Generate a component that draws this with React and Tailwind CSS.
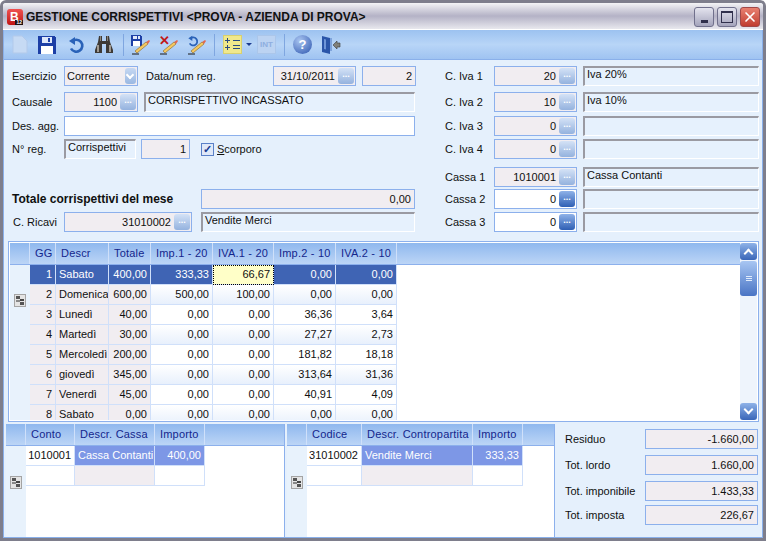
import { X } from "lucide-react";

const font = { fontFamily: '"Liberation Sans", sans-serif' };

function Label({ children, className = "" }) {
  return <span className={"text-[11px] text-[#101010] whitespace-nowrap " + className}>{children}</span>;
}

function LookupBtn({ on }) {
  return (
    <span
      className={
        "w-[16px] h-[16px] mr-[1px] shrink-0 rounded-[3px] flex items-center justify-center text-white text-[9px] leading-none font-bold " +
        (on ? "bg-linear-to-b from-[#8fb2e8] to-[#2f5fb4]" : "bg-linear-to-b from-[#d4e2f6] to-[#94b2de]")
      }
    >
      <span className="mb-[3px]">...</span>
    </span>
  );
}

function Field({ value, width, white, btn, on, select }) {
  return (
    <div
      className={
        "h-[20px] shrink-0 border border-[#8cb0ec] flex items-center justify-end text-[11px] text-[#101010] " +
        (white ? "bg-white " : "bg-[#f1edf1] ") +
        width
      }
    >
      <span className="pr-[3px] pl-[2px]">{value}</span>
      {btn && <LookupBtn on={on} />}
      {select}
    </div>
  );
}

function ReadOnly({ value, width }) {
  return (
    <div
      className={
        "h-[20px] shrink-0 border-t-2 border-l-2 border-t-[#9a9aa2] border-l-[#9a9aa2] border-r border-b border-r-white border-b-white bg-[#e6f1fd] pl-[2px] text-[11px] leading-[13px] text-[#101010] whitespace-nowrap overflow-hidden " +
        width
      }
    >
      {value}
    </div>
  );
}

function RightRow({ label, value, text, on, white, className = "" }) {
  return (
    <div className={"flex items-center " + className}>
      <Label className="w-[49px]">{label}</Label>
      <Field value={value} width="w-[83px]" white={white} btn on={on} />
      <div className="w-[6px]" />
      <ReadOnly value={text} width="w-[176px]" />
    </div>
  );
}

function RowHeadIcon() {
  return (
    <svg width="12" height="13" viewBox="0 0 12 13" shapeRendering="crispEdges">
      <rect x="0.5" y="0.5" width="11" height="12" fill="#e4e4e4" stroke="#a4a4a4" />
      <rect x="2" y="2" width="4" height="3" fill="#555" />
      <rect x="2" y="6" width="4" height="2" fill="#888" />
      <rect x="6" y="5" width="4" height="2" fill="#444" />
      <rect x="6" y="8" width="4" height="3" fill="#555" />
    </svg>
  );
}

function Head({ children }) {
  return (
    <div className="border-r border-[#cfe0fa] flex items-center justify-start pl-[5px] text-[11px] tracking-[0.2px] text-[#14268c] whitespace-nowrap">
      {children}
    </div>
  );
}

function Cell({ children, kind, left, even }) {
  const bg = {
    grey: "bg-[#f1edf1] text-[#101010]",
    plain: even ? "bg-linear-to-b from-white to-[#e8f0fc] text-[#101010]" : "bg-white text-[#101010]",
    sel: "bg-[#3f64b4] text-white",
    mark: "bg-[#7d97e6] text-white",
    focus: "bg-[#ffffc8] text-[#101010] outline-1 -outline-offset-1 outline-dotted outline-black",
  }[kind];
  return (
    <div
      className={
        "h-[20px] border-r border-b border-[#d0e0fa] flex items-center px-[3px] text-[11px] whitespace-nowrap overflow-hidden " +
        (left ? "justify-start " : "justify-end ") +
        bg
      }
    >
      {children}
    </div>
  );
}

const days = [
  ["1", "Sabato", "400,00", "333,33", "66,67", "0,00", "0,00"],
  ["2", "Domenica", "600,00", "500,00", "100,00", "0,00", "0,00"],
  ["3", "Lunedì", "40,00", "0,00", "0,00", "36,36", "3,64"],
  ["4", "Martedì", "30,00", "0,00", "0,00", "27,27", "2,73"],
  ["5", "Mercoledì", "200,00", "0,00", "0,00", "181,82", "18,18"],
  ["6", "giovedì", "345,00", "0,00", "0,00", "313,64", "31,36"],
  ["7", "Venerdì", "45,00", "0,00", "0,00", "40,91", "4,09"],
  ["8", "Sabato", "0,00", "0,00", "0,00", "0,00", "0,00"],
];

function dayKind(r, c) {
  if (r === 0) return c === 4 ? "focus" : "sel";
  return c < 3 ? "grey" : "plain";
}

function Total({ label, value, className = "" }) {
  return (
    <div className={"flex items-center " + className}>
      <Label className="w-[80px]">{label}</Label>
      <Field value={value} width="w-[113px]" />
    </div>
  );
}

function DocIcon() {
  return (
    <svg width="16" height="19" viewBox="0 0 16 19">
      <path d="M1 1h9l5 5v12H1z" fill="#c6daf4" stroke="#b2c9ea" />
    </svg>
  );
}

function FloppyIcon({ size = 18 }) {
  return (
    <svg width={size} height={size} viewBox="0 0 18 18" shapeRendering="crispEdges">
      <path d="M0 0h16l2 2v16H0z" fill="#1d3fa6" />
      <rect x="4" y="1" width="10" height="6" fill="#dfe8fa" />
      <rect x="10" y="2" width="2" height="4" fill="#1d3fa6" />
      <rect x="3" y="10" width="12" height="8" fill="#fff" />
    </svg>
  );
}

function UndoIcon({ size = 18 }) {
  return (
    <svg width={size} height={size} viewBox="0 0 18 18" fill="none">
      <path d="M5 5.5a6 6 0 1 1-1 7" stroke="#2a62b8" strokeWidth="2.6" />
      <path d="M8 1v8L2 5z" fill="#2a62b8" />
    </svg>
  );
}

function BinocularsIcon() {
  return (
    <svg width="20" height="19" viewBox="0 0 20 19">
      <path d="M5 1h3v5h4V1h3l1 6 3 8v3h-7V9H8v9H1v-3l3-8z" fill="#3e3a36" />
      <path d="M3 10h2v7H3zM15 10h2v7h-2z" fill="#a09a92" />
      <rect x="6" y="1" width="1" height="5" fill="#8a847c" />
      <rect x="13" y="1" width="1" height="5" fill="#8a847c" />
    </svg>
  );
}

function Pencil() {
  return (
    <svg width="20" height="20" viewBox="0 0 20 20" className="-ml-[20px]">
      <path d="M4 16 15 7l2 2L6 18z" fill="#f4c860" stroke="#8a6420" strokeWidth="0.6" />
      <path d="M15 7l2 2 2-3-1-1z" fill="#e06a50" />
      <path d="M1 19h7" stroke="#1a1a1a" />
    </svg>
  );
}

function PencilCombo({ children }) {
  return (
    <div className="flex w-[20px] h-[20px]">
      <div className="w-[20px] shrink-0">{children}</div>
      <Pencil />
    </div>
  );
}

function CalcIcon() {
  return (
    <div className="w-[19px] h-[19px] bg-[#f0e88c] border border-[#d8d070] flex items-center justify-center">
      <svg width="15" height="13" viewBox="0 0 15 13" shapeRendering="crispEdges" fill="#2a4a80">
        <path d="M2 0h1v2h2v1H3v2H2V3H0V2h2zM8 2h7v1H8zM2 7h1v2h2v1H3v2H2v-2H0V9h2zM8 7h7v1H8zM8 10h7v1H8z" />
      </svg>
    </div>
  );
}

function HelpIcon() {
  return (
    <div className="w-[19px] h-[19px] rounded-full bg-[radial-gradient(circle_at_35%_30%,#a8c4f0,#2c55ae)] flex items-center justify-center text-white font-bold text-[13px] leading-none">
      ?
    </div>
  );
}

function ExitIcon() {
  return (
    <svg width="20" height="20" viewBox="0 0 20 20">
      <path d="M1 1l8 2v16l-8-2z" fill="#2a55a8" />
      <path d="M3 4l2 .6v10L3 14z" fill="#6f96d8" />
      <path d="M9 3h2v13H9z" fill="#7fa4dc" />
      <path d="M12 10l4-4v2h3v4h-3v2z" fill="#80807a" stroke="#3a3a3a" strokeWidth="0.6" />
    </svg>
  );
}

function Sep({ className }) {
  return <div className={"w-[1px] h-[22px] bg-[#7fa6e0] " + className} />;
}

function Toolbar() {
  return (
    <div className="h-[30px] shrink-0 flex items-center pl-[8px] border-b border-[#8ab0ea] bg-linear-to-b from-[#9cc2f0] via-[#b8d5f7] to-[#9fc3f1]">
      <DocIcon />
      <div className="ml-[10px]"><FloppyIcon /></div>
      <div className="ml-[11px]"><UndoIcon /></div>
      <div className="ml-[9px]"><BinocularsIcon /></div>
      <Sep className="ml-[9px]" />
      <div className="ml-[7px]"><PencilCombo><FloppyIcon size={11} /></PencilCombo></div>
      <div className="ml-[8px]">
        <PencilCombo>
          <span className="block text-[#c01818] text-[13px] leading-[11px] font-bold">✕</span>
        </PencilCombo>
      </div>
      <div className="ml-[8px]"><PencilCombo><UndoIcon size={12} /></PencilCombo></div>
      <Sep className="ml-[7px]" />
      <div className="ml-[8px]"><CalcIcon /></div>
      <div className="ml-[4px] w-0 h-0 border-x-[3px] border-x-transparent border-t-[3px] border-t-[#1a3a90]" />
      <div className="ml-[5px] w-[19px] h-[19px] bg-[#bcd3f2] border border-[#abc6ea] flex items-center justify-center text-[8px] font-bold text-[#8eaee0]">
        INT
      </div>
      <Sep className="ml-[8px]" />
      <div className="ml-[8px]"><HelpIcon /></div>
      <div className="ml-[9px]"><ExitIcon /></div>
    </div>
  );
}

function TitleBar() {
  return (
    <div className="h-[27px] shrink-0 flex items-center pt-[1px] pl-[4px] pr-[3px] bg-linear-to-b from-[#f4f4f6] via-[#b4b2c6] to-[#e8e8ee] border-b border-white">
      <div className="relative w-[16px] h-[16px] rounded-[3px] bg-linear-to-b from-[#f05050] to-[#c01010] flex items-center pl-[3px] text-white font-bold text-[12px] leading-none">
        B
        <span className="absolute right-0 bottom-0 bg-[#201010] text-white text-[5px] leading-[5px] px-[1px]">12</span>
      </div>
      <span className="ml-[3px] text-[12px] font-bold text-[#111] whitespace-nowrap">
        GESTIONE CORRISPETTIVI &lt;PROVA - AZIENDA DI PROVA&gt;
      </span>
      <div className="ml-auto flex gap-[3px]">
        <div className="w-[20px] h-[20px] rounded-[3px] border border-[#70708c] bg-linear-to-b from-[#e4e4ee] to-[#a4a4bc] flex items-end justify-center pb-[3px]">
          <div className="w-[7px] h-[3px] bg-[#30304c]" />
        </div>
        <div className="w-[20px] h-[20px] rounded-[3px] border border-[#70708c] bg-linear-to-b from-[#e4e4ee] to-[#a4a4bc] flex items-center justify-center">
          <div className="w-[12px] h-[12px] border border-[#30304c] border-t-2" />
        </div>
        <div className="w-[20px] h-[20px] rounded-[3px] border border-[#a04848] bg-linear-to-b from-[#e88070] to-[#c03c30] flex items-center justify-center">
          <X size={16} strokeWidth={2.5} className="text-white" />
        </div>
      </div>
    </div>
  );
}

function Form() {
  return (
    <div className="h-[181px] shrink-0 flex pl-[8px] pt-[6px] bg-[#e5f0fc]">
      <div className="w-[404px] shrink-0">
        <div className="flex items-center">
          <Label className="w-[52px]">Esercizio</Label>
          <Field
            value={<span className="pr-[12px]">Corrente</span>}
            width="w-[74px]"
            select={
              <span className="w-[15px] h-[16px] mr-[1px] rounded-[3px] bg-linear-to-b from-[#c6d8f2] to-[#9ab8e2] flex items-center justify-center">
                <span className="w-[6px] h-[6px] border-r-2 border-b-2 border-white rotate-45 mb-[3px]" />
              </span>
            }
          />
          <Label className="ml-[8px] w-[127px]">Data/num reg.</Label>
          <Field value="31/10/2011" width="w-[83px]" btn />
          <div className="w-[6px]" />
          <Field value="2" width="w-[54px]" />
        </div>
        <div className="flex items-center mt-[6px]">
          <Label className="w-[52px]">Causale</Label>
          <Field value="1100" width="w-[74px]" btn />
          <div className="w-[6px]" />
          <ReadOnly value="CORRISPETTIVO INCASSATO" width="w-[271px]" />
        </div>
        <div className="flex items-center mt-[4px]">
          <Label className="w-[52px]">Des. agg.</Label>
          <Field value="" width="w-[351px]" white />
        </div>
        <div className="flex items-center mt-[3px]">
          <Label className="w-[52px]">N° reg.</Label>
          <ReadOnly value="Corrispettivi" width="w-[72px]" />
          <div className="w-[5px]" />
          <Field value="1" width="w-[49px]" />
          <div className="ml-[11px] w-[13px] h-[13px] border border-[#5a80c8] bg-[#dfe8f8] flex items-center justify-center text-[#1a3a90] text-[11px] leading-none font-bold">
            ✓
          </div>
          <Label className="ml-[3px]"><u>S</u>corporo</Label>
        </div>
        <div className="flex items-center mt-[30px]">
          <Label className="w-[189px] font-bold text-[12px]">Totale corrispettivi del mese</Label>
          <Field value="0,00" width="w-[214px]" />
        </div>
        <div className="flex items-center mt-[3px]">
          <Label className="w-[52px] pl-[1px]">C. Ricavi</Label>
          <Field value="31010002" width="w-[128px]" btn />
          <div className="w-[9px]" />
          <ReadOnly value="Vendite Merci" width="w-[214px]" />
        </div>
      </div>
      <div className="ml-[29px]">
        <RightRow label="C. Iva 1" value="20" text="Iva 20%" />
        <RightRow label="C. Iva 2" value="10" text="Iva 10%" className="mt-[6px]" />
        <RightRow label="C. Iva 3" value="0" className="mt-[4px]" />
        <RightRow label="C. Iva 4" value="0" className="mt-[3px]" />
        <RightRow label="Cassa 1" value="1010001" text="Cassa Contanti" className="mt-[8px]" />
        <RightRow label="Cassa 2" value="0" white on className="mt-[2px]" />
        <RightRow label="Cassa 3" value="0" white on className="mt-[3px]" />
      </div>
    </div>
  );
}

function Scrollbar() {
  const btn = "h-[17px] rounded-[3px] bg-linear-to-b from-[#8fb2e8] to-[#3a66b8] flex items-center justify-center";
  return (
    <div className="w-[17px] shrink-0 flex flex-col bg-[#eef4fc]">
      <div className={btn}>
        <span className="w-[7px] h-[7px] border-l-2 border-t-2 border-white rotate-45 mt-[4px]" />
      </div>
      <div className="h-[35px] mt-[1px] rounded-[3px] bg-linear-to-b from-[#a8c6f2] to-[#4a74c4] flex flex-col items-center justify-center gap-[1px]">
        <div className="w-[6px] h-[1px] bg-[#e0ecfc]" />
        <div className="w-[6px] h-[1px] bg-[#e0ecfc]" />
        <div className="w-[6px] h-[1px] bg-[#e0ecfc]" />
      </div>
      <div className="flex-1" />
      <div className={btn}>
        <span className="w-[7px] h-[7px] border-r-2 border-b-2 border-white rotate-45 mb-[4px]" />
      </div>
    </div>
  );
}

function MainGrid() {
  return (
    <div className="ml-[4px] mr-[3px] h-[181px] shrink-0 flex border border-[#8cb0ec] p-[1px] bg-white overflow-hidden">
      <div className="flex-1 min-w-0 flex flex-col">
        <div className="h-[22px] shrink-0 flex bg-linear-to-b from-[#8fb8ee] to-[#bcd5f6] border-b border-[#8cb0ec]">
          <div className="w-[20px] border-r border-[#cfe0fa]" />
          <div className="grid grid-cols-[26px_53px_42px_62px_61px_62px_61px]">
            {["GG", "Descr", "Totale", "Imp.1 - 20", "IVA.1 - 20", "Imp.2 - 10", "IVA.2 - 10"].map((h) => (
              <Head key={h}>{h}</Head>
            ))}
          </div>
        </div>
        <div className="flex-1 flex overflow-hidden">
          <div className="w-[20px] shrink-0 bg-[#e8f2fc] flex justify-center pt-[29px] pr-[1px]">
            <RowHeadIcon />
          </div>
          <div className="grid grid-cols-[26px_53px_42px_62px_61px_62px_61px] content-start">
            {days.map((row, r) =>
              row.map((v, c) => (
                <Cell key={r + "-" + c} kind={dayKind(r, c)} left={c === 1} even={r % 2 === 1}>
                  {v}
                </Cell>
              ))
            )}
          </div>
        </div>
      </div>
      <Scrollbar />
    </div>
  );
}

function SubGrid({ width, head, cols, rows }) {
  return (
    <div className={"h-full flex flex-col border-r border-[#8cb0ec] bg-white " + width}>
      <div className="h-[22px] shrink-0 flex bg-linear-to-b from-[#8fb8ee] to-[#bcd5f6] border-b border-[#8cb0ec]">
        <div className="w-[20px] shrink-0 border-r border-[#cfe0fa]" />
        <div className={"grid " + cols}>
          {head.map((h) => (
            <Head key={h}>{h}</Head>
          ))}
        </div>
      </div>
      <div className="flex-1 flex">
        <div className="w-[20px] shrink-0 bg-[#e8f2fc] flex justify-center pt-[30px] pr-[1px]">
          <RowHeadIcon />
        </div>
        <div className={"grid content-start " + cols}>
          <Cell kind="plain">{rows[0]}</Cell>
          <Cell kind="mark" left>{rows[1]}</Cell>
          <Cell kind="mark">{rows[2]}</Cell>
          <Cell kind="plain"> </Cell>
          <Cell kind="grey"> </Cell>
          <Cell kind="plain"> </Cell>
        </div>
      </div>
    </div>
  );
}

function Bottom() {
  return (
    <div className="flex-1 min-h-0 flex ml-[2px] pt-[2px]">
      <SubGrid
        width="w-[279px]"
        head={["Conto", "Descr. Cassa", "Importo"]}
        cols="grid-cols-[49px_80px_50px]"
        rows={["1010001", "Cassa Contanti", "400,00"]}
      />
      <div className="w-[2px]" />
      <SubGrid
        width="w-[268px]"
        head={["Codice", "Descr. Contropartita", "Importo"]}
        cols="grid-cols-[55px_111px_50px]"
        rows={["31010002", "Vendite Merci", "333,33"]}
      />
      <div className="flex-1 pl-[10px] pt-[5px] bg-[#e5f0fc]">
        <Total label="Residuo" value="-1.660,00" />
        <Total label="Tot. lordo" value="1.660,00" className="mt-[6px]" />
        <Total label="Tot. imponibile" value="1.433,33" className="mt-[6px]" />
        <Total label="Tot. imposta" value="226,67" className="mt-[4px]" />
      </div>
    </div>
  );
}

export default function App() {
  return (
    <div
      style={font}
      className="w-[766px] h-[541px] flex flex-col border-[3px] border-[#7e7e8c] rounded-t-[6px] bg-[#e5f0fc] overflow-hidden"
    >
      <TitleBar />
      <div className="flex-1 min-h-0 flex flex-col border-x border-b border-[#8ab0ea]">
        <Toolbar />
        <Form />
        <MainGrid />
        <Bottom />
      </div>
    </div>
  );
}
